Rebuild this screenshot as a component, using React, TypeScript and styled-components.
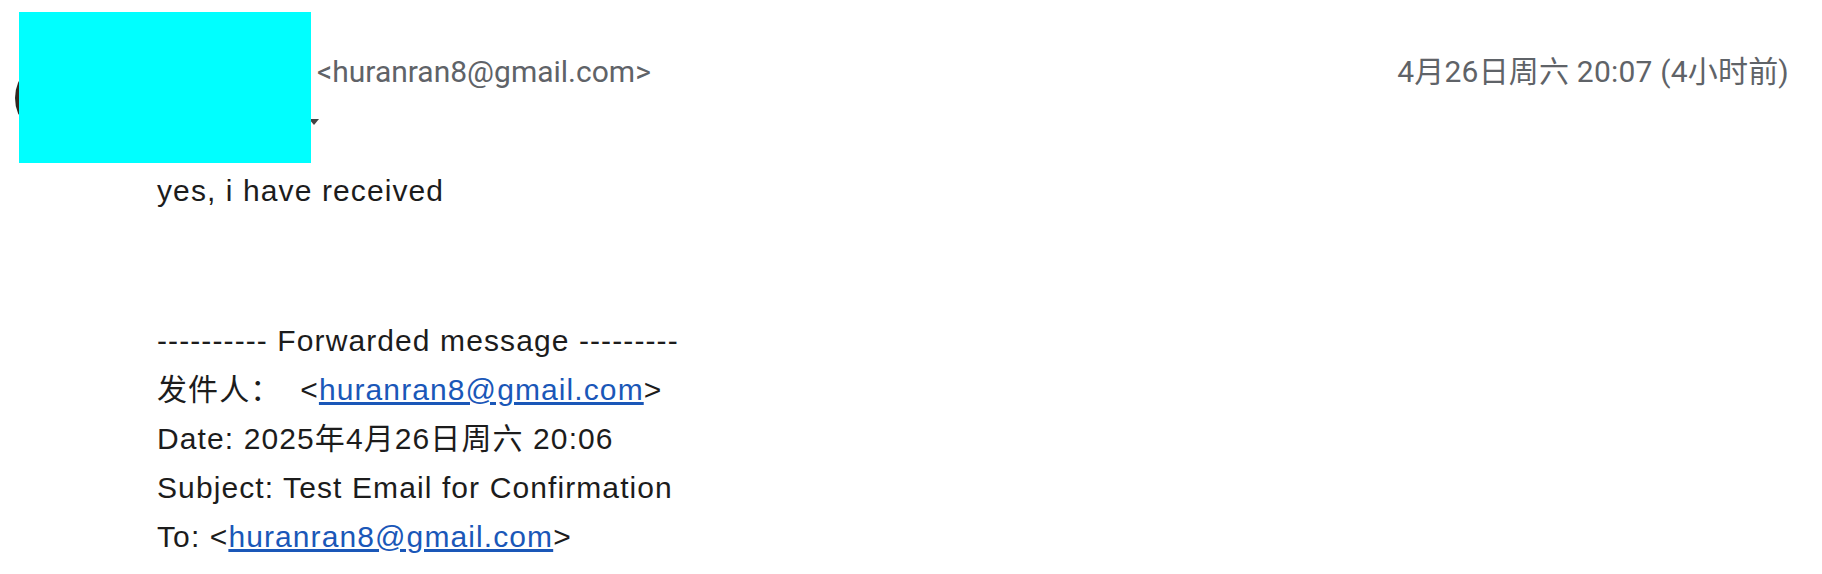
import styled, { createGlobalStyle } from 'styled-components';

const GlobalStyle = createGlobalStyle`
  body {
    margin: 0;
    background: #fff;
  }
`;

const Page = styled.div`
  position: relative;
  width: 1822px;
  height: 574px;
  overflow: hidden;
  background: #fff;
`;

const Header = styled.div`
  display: flex;
  align-items: flex-start;
  padding: 0 33px 0 15px;
`;

const Avatar = styled.div`
  width: 80px;
  height: 80px;
  margin-top: 58px;
  border-radius: 50%;
  background: radial-gradient(circle at 60% 45%, #6b5a4a 0%, #3a2f27 60%, #1c1714 100%);
  flex-shrink: 0;
`;

const Sender = styled.div`
  display: flex;
  flex-direction: column;
  margin-left: 24px;
  padding-top: 52px;
`;

const NameRow = styled.div`
  display: flex;
  align-items: baseline;
  height: 40px;
  line-height: 40px;
  font-family: Roboto, 'Noto Sans', sans-serif;
  font-size: 30px;
  color: #5f6368;
`;

// name is redacted in the source, keep its room
const NameSlot = styled.span`
  display: inline-block;
  width: 198px;
`;

const ToRow = styled.div`
  display: flex;
  align-items: center;
  height: 28px;
  padding-left: 190px;
  padding-top: 16px;
`;

const Caret = styled.span`
  width: 0;
  height: 0;
  border-left: 5px solid transparent;
  border-right: 5px solid transparent;
  border-top: 6px solid #444;
`;

const Stamp = styled.div`
  margin-left: auto;
  margin-top: 52px;
  line-height: 40px;
  font-family: Roboto, 'Noto Sans CJK SC', sans-serif;
  font-size: 30px;
  letter-spacing: 0.2px;
  color: #5f6368;
  white-space: nowrap;
`;

const Redaction = styled.div`
  position: absolute;
  left: 19px;
  top: 12px;
  width: 292px;
  height: 151px;
  background: #00ffff;
`;

const Body = styled.div`
  padding: 0 0 0 157px;
  margin-top: 28px;
  font-family: 'Liberation Sans', Arial, 'Noto Sans CJK SC', sans-serif;
  font-size: 30px;
  letter-spacing: 1.1px;
  line-height: 49px;
  color: #1c1c1c;
`;

const Line = styled.div<{ $gap?: number }>`
  margin-top: ${(p) => p.$gap ?? 0}px;
  white-space: nowrap;
`;

const Mail = styled.a`
  color: #1a57b8;
  text-decoration: underline;
`;

export default function App() {
  const addr = 'huranran8@gmail.com';

  return (
    <Page>
      <GlobalStyle />
      <Header>
        <Avatar />
        <Sender>
          <NameRow>
            <NameSlot />
            <span>&lt;{addr}&gt;</span>
          </NameRow>
          <ToRow>
            <Caret />
          </ToRow>
        </Sender>
        <Stamp>4月26日周六 20:07 (4小时前)</Stamp>
      </Header>
      <Body>
        <Line>yes, i have received</Line>
        <Line $gap={101}>---------- Forwarded message ---------</Line>
        <Line>
          发件人：{'\u00a0 '}&lt;<Mail href="#">{addr}</Mail>&gt;
        </Line>
        <Line>Date: 2025年4月26日周六 20:06</Line>
        <Line>Subject: Test Email for Confirmation</Line>
        <Line>
          To: &lt;<Mail href="#">{addr}</Mail>&gt;
        </Line>
      </Body>
      <Redaction />
    </Page>
  );
}
